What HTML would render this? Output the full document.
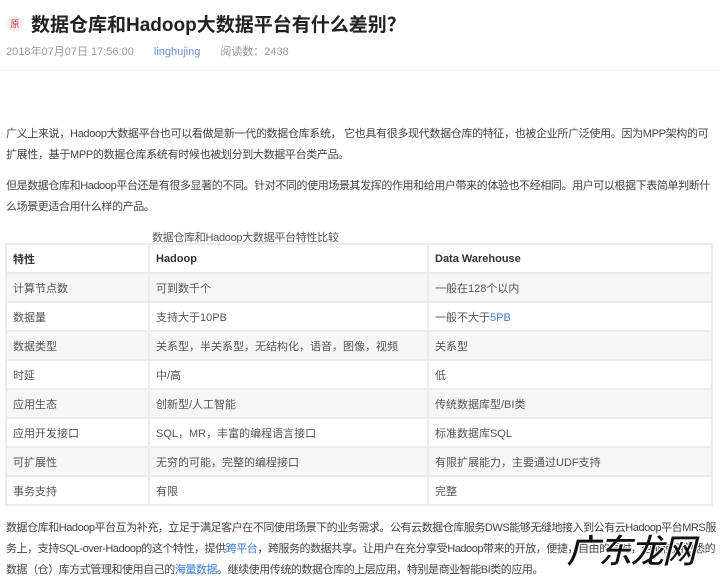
<!DOCTYPE html>
<html><head><meta charset="utf-8"><style>
body{margin:0;width:720px;height:579px;overflow:hidden;background:#fff;font-family:"Liberation Sans","Noto Sans CJK SC",sans-serif;color:#333;position:relative}
.t{position:absolute;left:7px;top:10px;font-size:19px;font-weight:bold;color:#222;display:flex;align-items:center}
.yuan{width:16px;height:16px;border-radius:50%;background:#f3eded;color:#c33;font-size:9px;font-weight:normal;display:inline-flex;align-items:center;justify-content:center;margin-right:8px}
.meta{position:absolute;left:6px;top:43px;font-size:11px;color:#999}
.meta span{margin-right:20px}
.hr{position:absolute;left:0;top:70px;width:720px;height:1px;background:#f3f3f3}
p{position:absolute;left:6px;margin:0;font-size:11px;line-height:21px;color:#444;width:712px;letter-spacing:-0.4px}
.cap{position:absolute;left:152px;top:229px;font-size:11px;color:#555;letter-spacing:-0.3px}
table{position:absolute;left:5px;top:243px;width:708px;border-collapse:collapse;font-size:11px;color:#555}
td{border:2px solid #ececec;height:27px;padding:0 6px}
tr:nth-child(even) td{background:#f6f6f6}
tr:first-child td{font-weight:bold;color:#333}
a{color:#3a7ad8;text-decoration:none}
.wm{position:absolute;left:566px;top:532px;font-size:34px;line-height:40px;font-weight:bold;color:#111;letter-spacing:-2px;-webkit-text-stroke:1px #fff;font-style:italic}
</style></head><body>
<div class="t"><span class="yuan">原</span>数据仓库和Hadoop大数据平台有什么差别？</div>
<div class="meta"><span>2018年07月07日 17:56:00</span><span style="color:#6a8fd0">linghujing</span><span>阅读数：2438</span></div>
<div class="hr"></div>
<p style="top:124px;letter-spacing:-0.33px">广义上来说，Hadoop大数据平台也可以看做是新一代的数据仓库系统， 它也具有很多现代数据仓库的特征，也被企业所广泛使用。因为MPP架构的可扩展性，基于MPP的数据仓库系统有时候也被划分到大数据平台类产品。</p>
<p style="top:176px">但是数据仓库和Hadoop平台还是有很多显著的不同。针对不同的使用场景其发挥的作用和给用户带来的体验也不经相同。用户可以根据下表简单判断什么场景更适合用什么样的产品。</p>
<div class="cap">数据仓库和Hadoop大数据平台特性比较</div>
<table>
<col style="width:143px"><col style="width:279px"><col>
<tr><td>特性</td><td>Hadoop</td><td>Data Warehouse</td></tr>
<tr><td>计算节点数</td><td>可到数千个</td><td>一般在128个以内</td></tr>
<tr><td>数据量</td><td>支持大于10PB</td><td>一般不大于<a>5PB</a></td></tr>
<tr><td>数据类型</td><td>关系型，半关系型，无结构化，语音，图像，视频</td><td>关系型</td></tr>
<tr><td>时延</td><td>中/高</td><td>低</td></tr>
<tr><td>应用生态</td><td>创新型/人工智能</td><td>传统数据库型/BI类</td></tr>
<tr><td>应用开发接口</td><td>SQL，MR，丰富的编程语言接口</td><td>标准数据库SQL</td></tr>
<tr><td>可扩展性</td><td>无穷的可能，完整的编程接口</td><td>有限扩展能力，主要通过UDF支持</td></tr>
<tr><td>事务支持</td><td>有限</td><td>完整</td></tr>
</table>
<p style="top:518px;letter-spacing:-0.45px">数据仓库和Hadoop平台互为补充，立足于满足客户在不同使用场景下的业务需求。公有云数据仓库服务DWS能够无缝地接入到公有云Hadoop平台MRS服务上，支持SQL-over-Hadoop的这个特性，提供<a>跨平台</a>，跨服务的数据共享。让用户在充分享受Hadoop带来的开放，便捷，自由的同时，也能使用熟悉的数据（仓）库方式管理和使用自己的<a>海量数据</a>。继续使用传统的数据仓库的上层应用，特别是商业智能BI类的应用。</p>
<div class="wm">广东龙网</div>
</body></html>
